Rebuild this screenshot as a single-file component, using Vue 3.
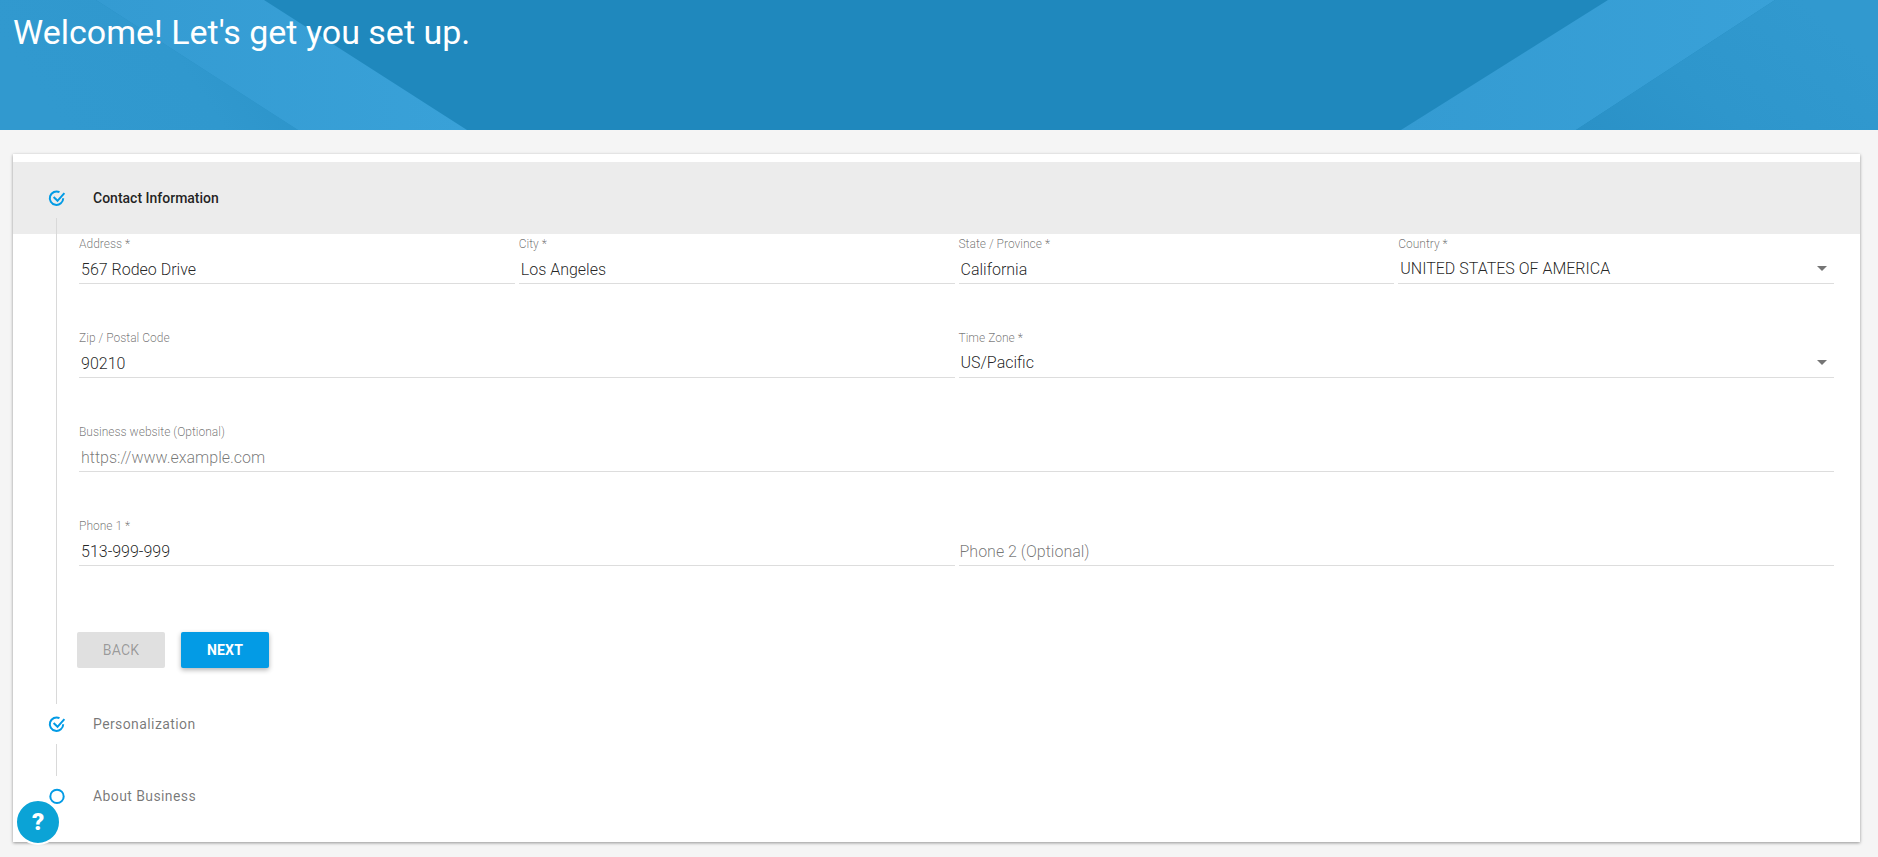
<script setup>
const rows = [
  { label: 'Address *', value: '567 Rodeo Drive' },
  { label: 'City *', value: 'Los Angeles' },
  { label: 'State / Province *', value: 'California' },
  { label: 'Country *', value: 'UNITED STATES OF AMERICA', select: true },
  { label: 'Zip / Postal Code', value: '90210', wide: true },
  { label: 'Time Zone *', value: 'US/Pacific', select: true, wide: true },
  { label: 'Business website (Optional)', placeholder: 'https://www.example.com', full: true },
  { label: 'Phone 1 *', value: '513-999-999', wide: true },
  { placeholder: 'Phone 2 (Optional)', wide: true, bare: true },
]
</script>

<template>
  <div class="page">
    <header class="hero">
      <svg class="hero-art" viewBox="0 0 1878 130" preserveAspectRatio="none" aria-hidden="true">
        <defs>
          <linearGradient id="bandL" x1="0" y1="0" x2="1" y2="0">
            <stop offset="0" stop-color="#349bd2" />
            <stop offset="1" stop-color="#39a1d8" />
          </linearGradient>
          <linearGradient id="sideL" x1="1" y1="0" x2="0" y2="0.3">
            <stop offset="0" stop-color="#2b92c8" />
            <stop offset="0.5" stop-color="#3098ce" />
            <stop offset="1" stop-color="#3199cf" />
          </linearGradient>
          <linearGradient id="sideR" x1="0" y1="1" x2="1" y2="0.5">
            <stop offset="0" stop-color="#2a91c7" />
            <stop offset="0.45" stop-color="#2e96cc" />
            <stop offset="1" stop-color="#3199cf" />
          </linearGradient>
        </defs>
        <polygon points="0,0 96,0 298,130 0,130" fill="url(#sideL)" />
        <polygon points="96,0 264,0 467,130 298,130" fill="url(#bandL)" />
        <polygon points="1608,0 1775,0 1576,130 1401,130" fill="url(#bandL)" />
        <polygon points="1775,0 1878,0 1878,130 1576,130" fill="url(#sideR)" />
      </svg>
      <h1 class="hero-title">Welcome! Let's get you set up.</h1>
    </header>

    <main class="card">
      <section class="step">
        <div class="step-head active">
          <svg class="step-icon" viewBox="0 0 16 16" aria-hidden="true">
            <path d="M14.2 8.2A6.7 6.7 0 1 1 10.5 2.2" class="ring" />
            <path d="M4.6 7.1 8.5 10.8 15.4 3.2" class="ring" />
          </svg>
          <span class="step-title strong">Contact Information</span>
        </div>
        <div class="step-body connector">
          <div class="fields">
            <div
              v-for="(f, i) in rows"
              :key="i"
              class="field"
              :class="{ wide: f.wide, full: f.full, select: f.select, bare: f.bare }"
            >
              <label class="label">{{ f.label }}</label>
              <div class="control">
                <span v-if="f.value" class="value">{{ f.value }}</span>
                <span v-else class="placeholder">{{ f.placeholder }}</span>
                <span v-if="f.select" class="arrow"></span>
              </div>
            </div>
          </div>
          <div class="actions">
            <button class="btn back" type="button">BACK</button>
            <button class="btn next" type="button">NEXT</button>
          </div>
        </div>
      </section>

      <section class="step">
        <div class="step-head">
          <svg class="step-icon" viewBox="0 0 16 16" aria-hidden="true">
            <path d="M14.2 8.2A6.7 6.7 0 1 1 10.5 2.2" class="ring" />
            <path d="M4.6 7.1 8.5 10.8 15.4 3.2" class="ring" />
          </svg>
          <span class="step-title">Personalization</span>
        </div>
        <div class="step-gap connector"></div>
      </section>

      <section class="step">
        <div class="step-head">
          <svg class="step-icon" viewBox="0 0 16 16" aria-hidden="true">
            <circle cx="8" cy="8.4" r="6.7" class="ring" />
          </svg>
          <span class="step-title">About Business</span>
        </div>
      </section>
    </main>

    <button class="help" type="button" aria-label="Help">?</button>
  </div>
</template>

<style>
html, body { margin: 0; background: #f5f5f5; }
</style>

<style scoped>
.page {
  height: 857px;
  background: #f5f5f5;
  font-family: Roboto, "Liberation Sans", sans-serif;
  overflow: hidden;
  position: relative;
}
.hero {
  height: 130px;
  background: #1f88bd;
  position: relative;
  overflow: hidden;
}
.hero-art {
  position: absolute;
  inset: 0;
  width: 100%;
  height: 100%;
}
.hero-title {
  position: relative;
  margin: 0;
  padding: 12px 0 0 13px;
  font-size: 34px;
  line-height: 40px;
  font-weight: 400;
  color: #fff;
}
.card {
  margin: 24px 18px 0 13px;
  height: 688px;
  box-sizing: border-box;
  padding-top: 8px;
  background: #fff;
  box-shadow: 0 1px 3px rgba(0, 0, 0, 0.4);
}
.step-head {
  height: 72px;
  display: flex;
  align-items: center;
  padding-left: 36px;
}
.step-head.active { background: #ececec; }
.step-icon {
  width: 16px;
  height: 16px;
  flex: none;
  overflow: visible;
}
.ring {
  fill: none;
  stroke: #039be5;
  stroke-width: 2;
}
.step-title {
  margin-left: 28px;
  font-size: 14px;
  font-weight: 400;
  letter-spacing: 0.4px;
  color: rgba(0, 0, 0, 0.54);
}
.step-title.strong {
  font-weight: 500;
  letter-spacing: 0;
  color: rgba(0, 0, 0, 0.87);
}
.step-body {
  padding: 0 26px 20px 66px;
}
.connector { position: relative; }
.connector::before {
  content: "";
  position: absolute;
  left: 43px;
  top: -16px;
  bottom: -16px;
  width: 1px;
  background: #d9d9d9;
}
.step-gap { height: 0; }
.fields {
  display: grid;
  grid-template-columns: repeat(4, 1fr);
  column-gap: 4px;
  row-gap: 44px;
}
.field {
  height: 50px;
  box-sizing: border-box;
  padding-top: 4px;
  border-bottom: 1px solid #ddd;
  position: relative;
}
.wide { grid-column: span 2; }
.full { grid-column: span 4; }
.label {
  display: block;
  height: 14px;
  line-height: 12px;
  font-size: 12px;
  font-weight: 300;
  color: rgba(0, 0, 0, 0.54);
}
.control {
  height: 31px;
  display: flex;
  align-items: center;
  padding: 0 2px;
  font-size: 16px;
  line-height: 20px;
  font-weight: 300;
  margin-top: 2px;
}
.value { color: rgba(0, 0, 0, 0.87); }
.placeholder { color: rgba(0, 0, 0, 0.54); }
.select .control { margin-top: 1px; }
.bare .control { padding-left: 1px; }
.arrow {
  margin-left: auto;
  margin-right: 5px;
  width: 0;
  height: 0;
  border-left: 5px solid transparent;
  border-right: 5px solid transparent;
  border-top: 5px solid rgba(0, 0, 0, 0.54);
}
.actions {
  display: flex;
  gap: 16px;
  margin: 66px 0 0 -2px;
}
.btn {
  width: 88px;
  height: 36px;
  border: 0;
  border-radius: 2px;
  font-family: inherit;
  font-size: 14px;
  padding: 0;
  letter-spacing: 0.2px;
}
.back {
  background: #e0e0e0;
  color: rgba(0, 0, 0, 0.33);
  font-weight: 400;
}
.next {
  background: #039be5;
  color: #fff;
  font-weight: 700;
  box-shadow: 0 2px 5px rgba(0, 0, 0, 0.3);
}
.help {
  position: absolute;
  left: 15px;
  top: 799px;
  width: 46px;
  height: 46px;
  box-sizing: border-box;
  border: 2px solid #fff;
  border-radius: 50%;
  background: #0ba3d6;
  color: #fff;
  font-family: inherit;
  font-size: 24px;
  font-weight: 900;
  padding: 0;
  line-height: 1;
}
</style>
